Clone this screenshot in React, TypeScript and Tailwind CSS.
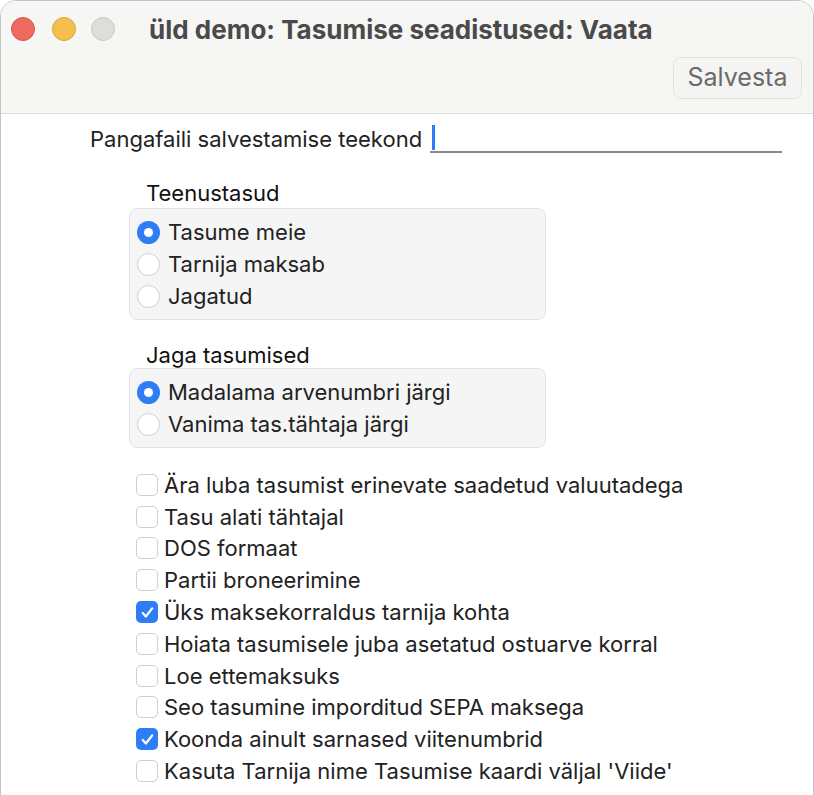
import React from "react";

const FONT = { fontFamily: 'Inter, "Liberation Sans", Arial, sans-serif' };

const CHECKS = [
  { label: "Ära luba tasumist erinevate saadetud valuutadega", on: false },
  { label: "Tasu alati tähtajal", on: false },
  { label: "DOS formaat", on: false },
  { label: "Partii broneerimine", on: false },
  { label: "Üks maksekorraldus tarnija kohta", on: true },
  { label: "Hoiata tasumisele juba asetatud ostuarve korral", on: false },
  { label: "Loe ettemaksuks", on: false },
  { label: "Seo tasumine imporditud SEPA maksega", on: false },
  { label: "Koonda ainult sarnased viitenumbrid", on: true },
  { label: "Kasuta Tarnija nime Tasumise kaardi väljal 'Viide'", on: false },
];

function Radio({ on, label }: { on: boolean; label: string }) {
  return (
    <div className="flex items-center h-[32px]">
      {on ? (
        <span className="w-[23px] h-[23px] rounded-full bg-[#2f7df6] flex items-center justify-center">
          <span className="w-[9px] h-[9px] rounded-full bg-white" />
        </span>
      ) : (
        <span className="w-[23px] h-[23px] rounded-full bg-white border border-[#cfcfcf]" />
      )}
      <span className="ml-[8px] text-[22px] leading-[26px] text-[#222]">{label}</span>
    </div>
  );
}

function Check({ on, label }: { on: boolean; label: string }) {
  return (
    <div className="flex items-center h-[31.8px]">
      {on ? (
        <span className="w-[22px] h-[22px] rounded-[5px] bg-[#2f7df6] flex items-center justify-center">
          <svg width="15" height="15" viewBox="0 0 16 16" fill="none">
            <path d="M3 8.6l3.2 3.6L13 3.6" stroke="white" strokeWidth="2.4" strokeLinecap="round" strokeLinejoin="round" />
          </svg>
        </span>
      ) : (
        <span className="w-[22px] h-[22px] rounded-[5px] bg-white border border-[#cfcfcf]" />
      )}
      <span className="ml-[6px] text-[22px] leading-[26px] text-[#222]">{label}</span>
    </div>
  );
}

export default function App() {
  return (
    <div className="w-[814px] h-[795px] bg-white" style={FONT}>
      <div className="w-[814px] h-[812px] rounded-[16px] border border-[#c4c4c4] overflow-hidden bg-white flex flex-col">
        {/* Title bar + toolbar */}
        <div className="h-[113px] bg-[#f6f6f4] border-b border-[#dcdcdc] flex flex-col">
          <div className="flex items-center h-[56px] pl-[10px]">
            <span className="w-[24px] h-[24px] rounded-full bg-[#ee6a5f] border border-[#d8554b]" />
            <span className="w-[24px] h-[24px] rounded-full bg-[#f5bf4f] border border-[#d9a43a] ml-[17px]" />
            <span className="w-[24px] h-[24px] rounded-full bg-[#dddddc] border border-[#c9c9c8] ml-[15px]" />
            <span className="ml-[34px] text-[26px] font-bold text-[#4a4a4a]">üld demo: Tasumise seadistused: Vaata</span>
          </div>
          <div className="flex justify-end pr-[11px]">
            <button className="h-[42px] w-[129px] rounded-[8px] border border-[#e2e2e0] bg-[#f4f4f2] text-[25px] text-[#6a6a6a]">
              Salvesta
            </button>
          </div>
        </div>

        {/* Body */}
        <div className="flex flex-col pl-[89px]">
          <div className="flex items-end h-[39px]">
            <span className="text-[22px] text-[#222] leading-[26px] mb-[1px]">Pangafaili salvestamise teekond</span>
            <div className="ml-[8px] w-[352px] h-[28px] border-b-2 border-[#8a8a8a] flex items-start">
              <span className="w-[3px] h-[25px] bg-[#2f7df6] ml-[2px]" />
            </div>
          </div>

          <div className="ml-[56px] mt-[28px] text-[22px] text-[#111] leading-[24px]">Teenustasud</div>
          <div className="ml-[39px] mt-[3px] w-[417px] h-[112px] rounded-[8px] bg-[#f5f5f5] border border-[#e4e4e4] pl-[7px] pt-[7px]">
            <Radio on label="Tasume meie" />
            <Radio on={false} label="Tarnija maksab" />
            <Radio on={false} label="Jagatud" />
          </div>

          <div className="ml-[56px] mt-[23px] text-[22px] text-[#111] leading-[24px]">Jaga tasumised</div>
          <div className="ml-[39px] mt-[1px] w-[417px] h-[80px] rounded-[8px] bg-[#f5f5f5] border border-[#e4e4e4] pl-[7px] pt-[7px]">
            <Radio on label="Madalama arvenumbri järgi" />
            <Radio on={false} label="Vanima tas.tähtaja järgi" />
          </div>

          <div className="ml-[46px] mt-[21px] flex flex-col">
            {CHECKS.map((c) => (
              <Check key={c.label} on={c.on} label={c.label} />
            ))}
          </div>
        </div>
      </div>
    </div>
  );
}
